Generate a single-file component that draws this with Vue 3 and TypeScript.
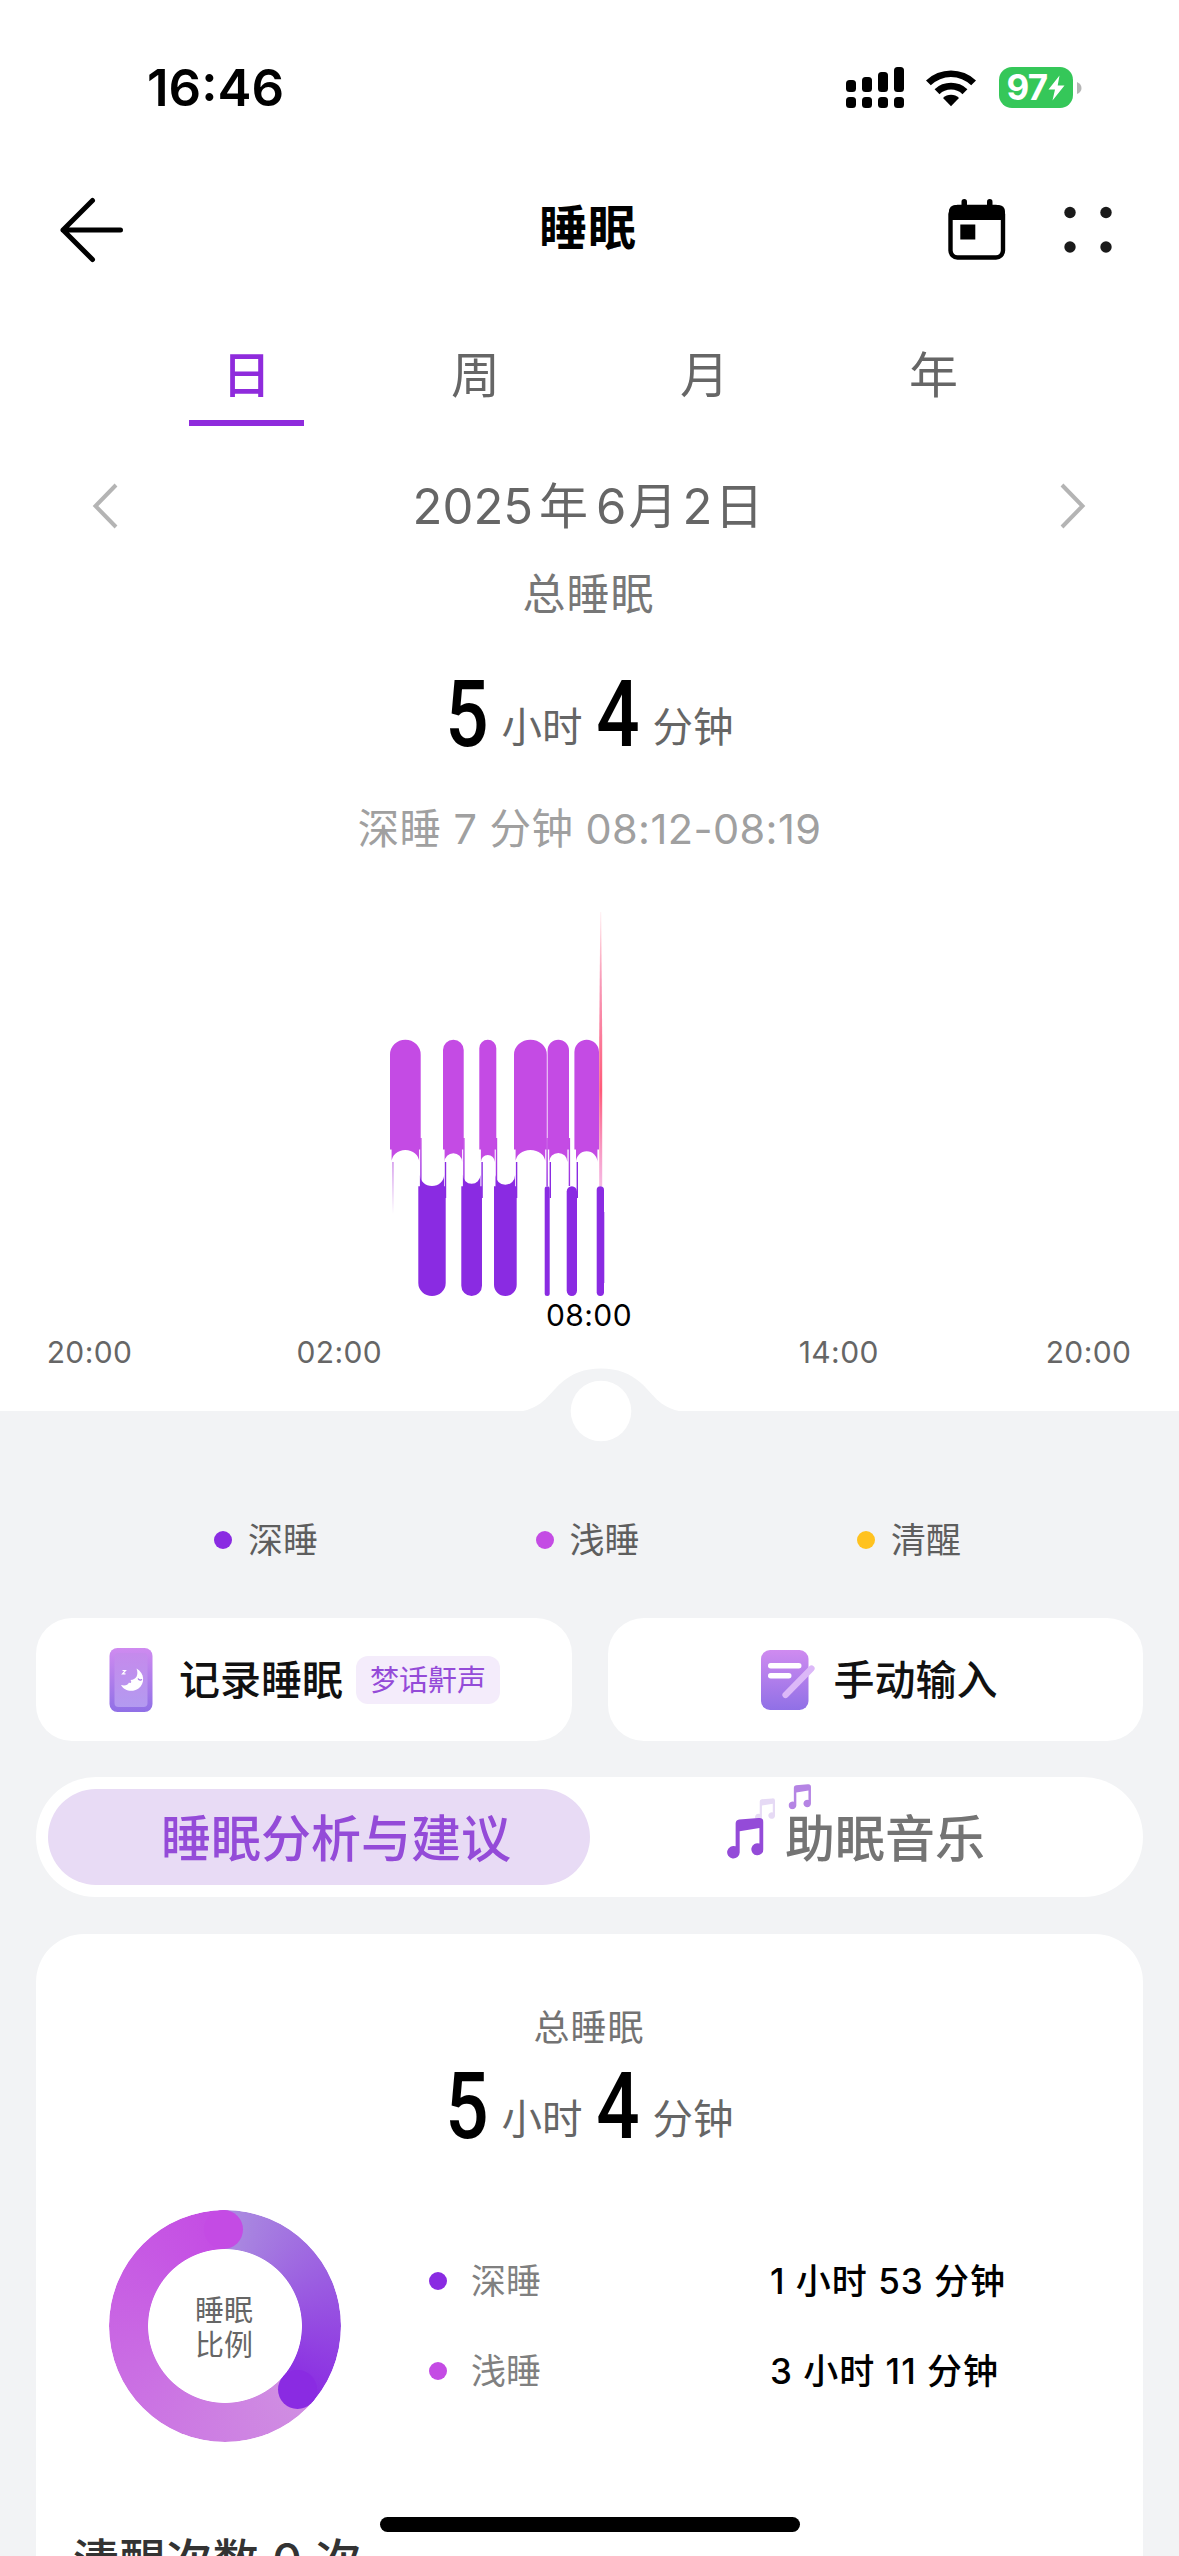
<script setup lang="ts">
interface Bar { x: number; w: number }
interface Stage { name: string; color: string; value?: string }

const signalTops: number[] = [13, 10, 5, 0]
const periods: string[] = ['日', '周', '月', '年']
const hours: string[] = ['20:00', '02:00', '08:00', '14:00', '20:00']

const lightBars: Bar[] = [
  { x: 390, w: 30.7 }, { x: 443, w: 20.7 }, { x: 479.3, w: 17 },
  { x: 514, w: 32.8 }, { x: 547.6, w: 21.4 }, { x: 574.4, w: 24.6 },
]
const deepBars: Bar[] = [
  { x: 418.3, w: 27.4 }, { x: 461.3, w: 20.7 }, { x: 494, w: 22.7 },
  { x: 544.7, w: 5 }, { x: 566.7, w: 10.3 }, { x: 596.7, w: 7.3 },
]

// Light sleep: rounded top, scooped bottom that leads into the connectors
function lightPath(b: Bar): string {
  const r = b.w / 2
  const c = Math.min(r, 15)
  const l = b.x, e = b.x + b.w
  const i = 1.6
  const ri = r - i
  return `M${l} 1149.5V${1039.7 + c}A${r} ${c} 0 0 1 ${e} ${1039.7 + c}V1149.5H${e - i}V1162` +
    `A${ri} ${Math.min(ri, 12)} 0 0 0 ${l + i} 1162V1149.5Z`
}
// Deep sleep: rounded bottom, scooped top on the wide bars
function deepPath(b: Bar): string {
  const r = b.w / 2
  const c = Math.min(r, 13)
  const l = b.x, e = b.x + b.w
  const foot = `V${1296 - c}A${r} ${c} 0 0 1 ${l} ${1296 - c}`
  if (b.w < 15) return `M${l} ${1186.3 + c}A${r} ${c} 0 0 1 ${e} ${1186.3 + c}${foot}Z`
  const i = 1.6
  const ri = r - i
  return `M${l} 1186.3H${l + i}V1175A${ri} ${Math.min(ri, 11)} 0 0 0 ${e - i} 1175V1186.3H${e}${foot}Z`
}

const falls: number[] = [420.2, 463.2, 495.8, 546.4, 568.7]
const rises: number[] = [444.8, 481.4, 515.9, 549.6, 576.6]

const legend: Stage[] = [
  { name: '深睡', color: '#8a2be2' },
  { name: '浅睡', color: '#c44be4' },
  { name: '清醒', color: '#ffc21f' },
]
const breakdown: Stage[] = [
  { name: '深睡', color: '#8a2be2', value: '1 小时 53 分钟' },
  { name: '浅睡', color: '#c44be4', value: '3 小时 11 分钟' },
]
</script>

<template>
  <div class="screen">
    <header class="status">
      <span class="clock">16:46</span>
      <div class="status-icons">
        <svg class="signal" width="58" height="41" viewBox="0 0 58 41">
          <g v-for="(t, i) in signalTops" :key="i">
            <rect :x="i * 16" :y="t" width="10" :height="25 - t" rx="3.5" />
            <rect :x="i * 16" y="30" width="10" height="11" rx="3.5" />
          </g>
        </svg>
        <svg class="wifi" width="52" height="38" viewBox="0 0 52 38">
          <path d="M1 11.5A36 36 0 0 1 51 11.5L46.2 16.3A29 29 0 0 0 5.800 16.300Z" />
          <path d="M9.600 20.300A23.500 23.500 0 0 1 42.400 20.300L37.500 25.200A16.600 16.600 0 0 0 14.500 25.200Z" />
          <path d="M18 28.900A11.500 11.500 0 0 1 34 28.900L26 37.300Z" />
        </svg>
        <div class="battery">
          <span>97</span>
          <svg width="17" height="26" viewBox="0 0 17 26"><path d="M11.500 0.500L0.500 14.500H7L4.500 25.500L16.500 10.500H9.700Z" fill="#fff" /></svg>
        </div>
        <svg class="nub" width="5" height="12" viewBox="0 0 5 12"><path d="M0 0Q4.500 2 4.500 6T0 12Z" fill="#b5b5b5" /></svg>
      </div>
    </header>

    <nav class="nav">
      <svg class="back" width="66" height="68" viewBox="0 0 66 68" fill="none" stroke="#000" stroke-width="5" stroke-linecap="round" stroke-linejoin="round">
        <path d="M61.500 34H4M33.500 4.500L4 34L33.500 63.500" />
      </svg>
      <h1>睡眠</h1>
      <div class="nav-actions">
        <svg width="58" height="62" viewBox="0 0 58 62">
          <rect x="13.500" y="0" width="5.500" height="12" rx="2.700" />
          <rect x="39" y="0" width="5.500" height="12" rx="2.700" />
          <rect x="2.500" y="8" width="52.500" height="50.500" rx="7" fill="none" stroke="#000" stroke-width="4.400" />
          <path d="M1 21V13Q1 6 8 6H50Q57 6 57 13V21Z" />
          <rect x="12.300" y="25.500" width="15" height="15" />
        </svg>
        <svg class="dots" width="48" height="48" viewBox="0 0 48 48" fill="#1a1a1a">
          <circle cx="6" cy="6.500" r="5.700" /><circle cx="42" cy="6.500" r="5.700" />
          <circle cx="6" cy="41" r="5.700" /><circle cx="42" cy="41" r="5.700" />
        </svg>
      </div>
    </nav>

    <div class="tabs">
      <div v-for="(p, i) in periods" :key="p" class="tab" :class="{ active: i === 0 }"><span>{{ p }}</span></div>
    </div>

    <div class="date-row">
      <svg width="28" height="48" viewBox="0 0 28 48"><path d="M24 3L3.500 24L24 45" /></svg>
      <div class="date"><span>2025</span><span class="year">年</span><span>6</span><span class="month">月</span><span>2</span><span class="day">日</span></div>
      <svg width="28" height="48" viewBox="0 0 28 48"><path d="M4 3L24.500 24L4 45" /></svg>
    </div>

    <div class="total-label">总睡眠</div>
    <div class="total">
      <b>5</b><span>小时</span><b>4</b><span>分钟</span>
    </div>
    <div class="detail">深睡 7 分钟 08:12-08:19</div>

    <svg class="chart" width="1179" height="400" viewBox="0 900 1179 400">
      <defs>
        <linearGradient id="wake" x1="0" y1="912" x2="0" y2="1186" gradientUnits="userSpaceOnUse">
          <stop offset="0" stop-color="#ff5a7a" stop-opacity="0.100" />
          <stop offset="0.250" stop-color="#f5709a" stop-opacity="0.700" />
          <stop offset="0.650" stop-color="#ff5a78" />
          <stop offset="1" stop-color="#f08ad0" stop-opacity="0.600" />
        </linearGradient>
        <linearGradient id="link" x1="0" y1="1138" x2="0" y2="1198" gradientUnits="userSpaceOnUse">
          <stop offset="0" stop-color="#c44be4" />
          <stop offset="1" stop-color="#8a2be2" />
        </linearGradient>
        <linearGradient id="lead" x1="0" y1="1160" x2="0" y2="1214" gradientUnits="userSpaceOnUse">
          <stop offset="0" stop-color="#c77be6" />
          <stop offset="1" stop-color="#c77be6" stop-opacity="0" />
        </linearGradient>
      </defs>
      <rect x="392.300" y="1162" width="1.300" height="52" fill="url(#lead)" />
      <rect v-for="x in falls" :key="'f' + x" :x="x" y="1138" width="1.400" height="48" fill="url(#link)" />
      <rect v-for="x in rises" :key="'r' + x" :x="x" y="1162" width="1.400" height="36" fill="#8a2be2" />
      <path v-for="b in lightBars" :key="'l' + b.x" :d="lightPath(b)" fill="#c44be4" />
      <path v-for="b in deepBars" :key="'d' + b.x" :d="deepPath(b)" fill="#8a2be2" />
      <path d="M600.300 912H601.200L602.200 1040V1186H599.200V1040Z" fill="url(#wake)" />
      <rect x="603" y="1212" width="1.500" height="71" fill="#8a2be2" opacity="0.600" />
    </svg>
    <div class="axis">
      <span v-for="(h, i) in hours" :key="i" :class="{ current: i === 2 }">{{ h }}</span>
    </div>

    <main class="panel">
      <svg class="handle" width="190" height="76" viewBox="505.500 1367 190 76">
        <path d="M513 1412C541 1411 548 1394 560 1383.500C571 1373.500 584 1368.500 600.500 1368.500S630 1373.500 641 1383.500C653 1394 660 1411 688 1412Z" fill="#f2f3f5" />
        <circle cx="600.500" cy="1411" r="30.300" fill="#fff" />
      </svg>
      <div class="legend">
        <div v-for="s in legend" :key="s.name"><i :style="{ background: s.color }"></i>{{ s.name }}</div>
      </div>

      <div class="actions">
        <button class="record">
          <svg width="44" height="66" viewBox="0 0 44 66">
            <defs>
              <linearGradient id="pg" x1="0" y1="0" x2="0" y2="1"><stop offset="0" stop-color="#cf8bf0" /><stop offset="1" stop-color="#9070e6" /></linearGradient>
              <linearGradient id="ps" x1="0" y1="0" x2="0" y2="1"><stop offset="0" stop-color="#c58aec" /><stop offset="1" stop-color="#b39af0" /></linearGradient>
            </defs>
            <rect x="0.500" y="1" width="43" height="64" rx="8" fill="url(#pg)" />
            <rect x="5.500" y="6" width="33" height="54" rx="4" fill="url(#ps)" />
            <path d="M27.500 21.500C36 26 36 37 29.500 41.500C23 46 15 43.500 12 38C16 39 19 38 20 35.500C22 37 23 35 21.500 33C27 33 30 28 27.500 21.500Z" fill="#fff" />
            <path d="M29 31.500Q30.500 34 33 32.500" stroke="#a678e4" stroke-width="1.300" fill="none" />
            <path d="M13.500 23.500H16.500L13.500 26.800H16.500" stroke="#fff" stroke-width="1.200" fill="none" />
          </svg>
          <strong>记录睡眠</strong>
          <em>梦话鼾声</em>
        </button>
        <button class="manual">
          <svg width="54" height="62" viewBox="0 0 54 62">
            <rect x="0" y="1" width="47.500" height="60" rx="9" fill="url(#pg)" />
            <rect x="7" y="14" width="33.500" height="5.400" rx="2.700" fill="#fff" />
            <rect x="7" y="24" width="23.500" height="5.400" rx="2.700" fill="#fff" />
            <path d="M24.500 46L50.500 19.500" stroke="#dcb8f8" stroke-width="6.200" stroke-linecap="round" />
          </svg>
          <strong>手动输入</strong>
        </button>
      </div>

      <div class="segment">
        <div class="seg on">睡眠分析与建议</div>
        <div class="seg off">
          <span>助眠音乐</span>
          <svg class="notes" width="86" height="76" viewBox="0 0 86 76">
            <defs>
              <symbol id="note" viewBox="0 0 36 41">
                <path d="M8.500 6Q8.500 2.500 12 1.900L31 0.500Q36 0 36 4.500V31A6 6 0 1 1 32 25.700V10.300L12.500 13.500V34.500A6.200 6.200 0 1 1 8.500 28.500Z" />
              </symbol>
            </defs>
            <use href="#note" x="28" y="14" width="20" height="23" fill="#e6daf5" />
            <use href="#note" x="61.500" y="0" width="22.500" height="25.500" fill="#b584e4" />
            <use href="#note" x="0" y="33.500" width="36.500" height="41.500" fill="#944bd8" />
          </svg>
        </div>
      </div>

      <section class="card">
        <div class="card-label">总睡眠</div>
        <div class="total">
          <b>5</b><span>小时</span><b>4</b><span>分钟</span>
        </div>
        <div class="ratio">
          <div class="donut">
            <div class="ring"></div>
            <i class="cap deep"></i>
            <i class="cap light"></i>
            <div class="donut-text">睡眠<br>比例</div>
          </div>
          <div class="rows">
            <div v-for="s in breakdown" :key="s.name" class="row">
              <i :style="{ background: s.color }"></i>
              <span class="name">{{ s.name }}</span>
              <span class="value">{{ s.value }}</span>
            </div>
          </div>
        </div>
        <h2>清醒次数 0 次</h2>
      </section>
    </main>
    <div class="home"></div>
  </div>
</template>

<style>
body { margin: 0; overflow: hidden; }
</style>

<style scoped>
.screen { position: relative; width: 1179px; height: 2556px; overflow: hidden; background: #fff; color: #000; font-family: Inter, "Noto Sans CJK SC", sans-serif; display: flex; flex-direction: column; }
.screen svg { display: block; flex: none; }
.status { height: 175px; flex: none; display: flex; align-items: center; justify-content: space-between; padding: 0 97px 0 147px; box-sizing: border-box; }
.clock { font-size: 51px; font-weight: 600; line-height: 60px; letter-spacing: 0; }
.status-icons { display: flex; align-items: center; }
.wifi { margin-left: 21px; }
.battery { margin-left: 22px; width: 74px; height: 41px; border-radius: 13px; background: #35c759; color: #fff; display: flex; align-items: center; justify-content: center; gap: 1px; font-size: 35px; font-weight: 700; line-height: 41px; letter-spacing: -0.8px; }
.nub { margin-left: 4px; }
.nav { height: 109px; flex: none; display: flex; align-items: center; justify-content: space-between; padding: 0 67px 0 59px; }
.back { margin-right: 98px; }
.nav h1 { margin: 0 0 4px 5px; font-size: 48px; line-height: 60px; font-weight: 600; letter-spacing: 1px; }
.nav-actions { display: flex; align-items: center; gap: 58px; }
.tabs { height: 101px; flex: none; margin: 41px 131px 0 132px; display: flex; }
.tab { flex: 1; display: flex; justify-content: center; font-size: 49px; line-height: 101px; color: #666; }
.tab.active { color: #8f2bdc; font-weight: 500; }
.tab span { width: 115px; text-align: center; box-sizing: border-box; height: 101px; }
.tab.active span { border-bottom: 6px solid #8f2bdc; }
.date-row { height: 80px; flex: none; margin-top: 40px; padding: 0 92.5px 0 91.5px; display: flex; align-items: center; justify-content: space-between; }
.date-row path { fill: none; stroke: #b4b4b4; stroke-width: 4; }
.date { display: flex; font-size: 49px; line-height: 80px; color: #666; padding-top: 2px; margin-right: 2px; }
.date .year { margin: 0 8px 0 6px; }
.date .month { margin: 0 5px 0 2px; }
.date .day { margin-left: 2px; }
.total-label { height: 60px; line-height: 60px; flex: none; margin-top: 18px; text-align: center; font-size: 43px; letter-spacing: 1px; color: #777; text-indent: -2px; }
.total { height: 80px; flex: none; margin-top: 49px; display: flex; align-items: flex-end; justify-content: center; color: #666; }
.total b { font-family: Roboto, sans-serif; font-weight: 500; font-size: 93px; line-height: 80px; color: #000; width: 42px; display: flex; justify-content: center; transform: scaleX(0.820); padding-top: 2px; margin-bottom: -2px; }
.total span { font-size: 40.5px; line-height: 50px; margin: 0 14px 0 14px; }
.total span:last-child { margin-right: 0; }
.detail { height: 60px; line-height: 60px; flex: none; margin-top: 46px; text-align: center; font-size: 41.5px; letter-spacing: 0.4px; color: #a0a0a0; }
.chart { margin-top: 41px; }
.axis { height: 67px; flex: none; display: flex; justify-content: space-between; align-items: flex-end; padding: 0 47.5px 0 46.5px; font-size: 30px; line-height: 30px; letter-spacing: 0.4px; color: #666; }
.axis span { width: 86px; text-align: center; }
.axis .current { align-self: flex-start; color: #000; }
.panel { position: relative; margin-top: 44px; flex: 1; background: #f2f3f5; padding: 104px 36px 0; }
.handle { position: absolute; left: 505.5px; top: -44px; }
.legend { display: flex; height: 50px; padding-left: 178px; font-size: 35px; color: #5e5e5e; }
.legend div { width: 321.5px; flex: none; display: flex; align-items: center; line-height: 50px; }
.legend i, .row i { width: 18px; height: 18px; border-radius: 50%; margin-right: 16px; flex: none; }
.actions { display: flex; justify-content: space-between; margin-top: 53px; }
.actions button { width: 535.5px; flex: none; height: 123px; border: 0; padding: 0; border-radius: 36px; background: #fff; display: flex; align-items: center; font-family: inherit; color: #111; box-sizing: border-box; }
.actions .record { padding-left: 73px; }
.actions .manual { padding-left: 153px; }
.actions strong { font-size: 41px; font-weight: 500; line-height: 60px; margin-left: 26px; white-space: nowrap; }
.actions .manual strong { margin-left: 19px; }
.actions em { font-style: normal; font-size: 29px; line-height: 48px; padding: 0 14px; border-radius: 12px; background: #f4ecfb; color: #944bd8; margin-left: 13px; white-space: nowrap; padding-top: 2px; padding-bottom: 0; line-height: 46px; }
.segment { margin-top: 36px; height: 120px; border-radius: 60px; background: #fff; display: flex; padding: 12px; box-sizing: border-box; font-size: 50px; font-weight: 500; }
.seg { height: 96px; line-height: 100px; }
.seg.on { width: 542px; border-radius: 48px; background: #e8dbf5; color: #944bd8; text-align: center; padding-left: 34px; box-sizing: border-box; }
.seg.off { position: relative; padding-left: 195px; color: #747474; }
.notes { position: absolute; left: 137px; top: -5px; }
.card { margin-top: 37px; height: 700px; border-radius: 48px; background: #fff; padding-top: 69px; box-sizing: border-box; }
.card-label { text-align: center; font-size: 36px; letter-spacing: 1px; text-indent: -1px; line-height: 50px; color: #737373; }
.card .total { margin-top: 12px; }
.ratio { display: flex; margin-top: 65px; height: 232px; padding-left: 73px; }
.donut { position: relative; width: 232px; height: 232px; flex: none; display: flex; align-items: center; justify-content: center; }
.ring { position: absolute; inset: 0; border-radius: 50%; background: conic-gradient(#ab8de0 0deg, #8a2be2 131deg, #d08fe2 131.5deg, #c44be4 360deg); -webkit-mask: radial-gradient(circle, transparent 76.5px, #000 77.3px); mask: radial-gradient(circle, transparent 76.5px, #000 77.3px); }
.cap { position: absolute; width: 39px; height: 39px; border-radius: 50%; }
.cap.deep { left: 168.5px; top: 159.5px; background: #8a2be2; }
.cap.light { left: 94.5px; top: 0; background: #c44be4; }
.donut-text { font-size: 29px; line-height: 35px; color: #666; text-align: center; padding: 3px 2px 0 0; }
.rows { margin-left: 88px; padding-top: 26px; }
.row { display: flex; align-items: center; height: 90px; font-size: 35px; line-height: 50px; width: 660px; color: #808080; }
.row .name { width: 299px; margin-left: 8px; }
.row .value { font-size: 35px; font-weight: 500; color: #000; letter-spacing: 1px; }
.card h2 { margin: 88px 0 0 37px; font-size: 46px; line-height: 60px; font-weight: 500; color: #333; letter-spacing: 0.6px; }
.home { position: absolute; left: 380px; top: 2517px; width: 420px; height: 15px; border-radius: 8px; background: #000; }
</style>
